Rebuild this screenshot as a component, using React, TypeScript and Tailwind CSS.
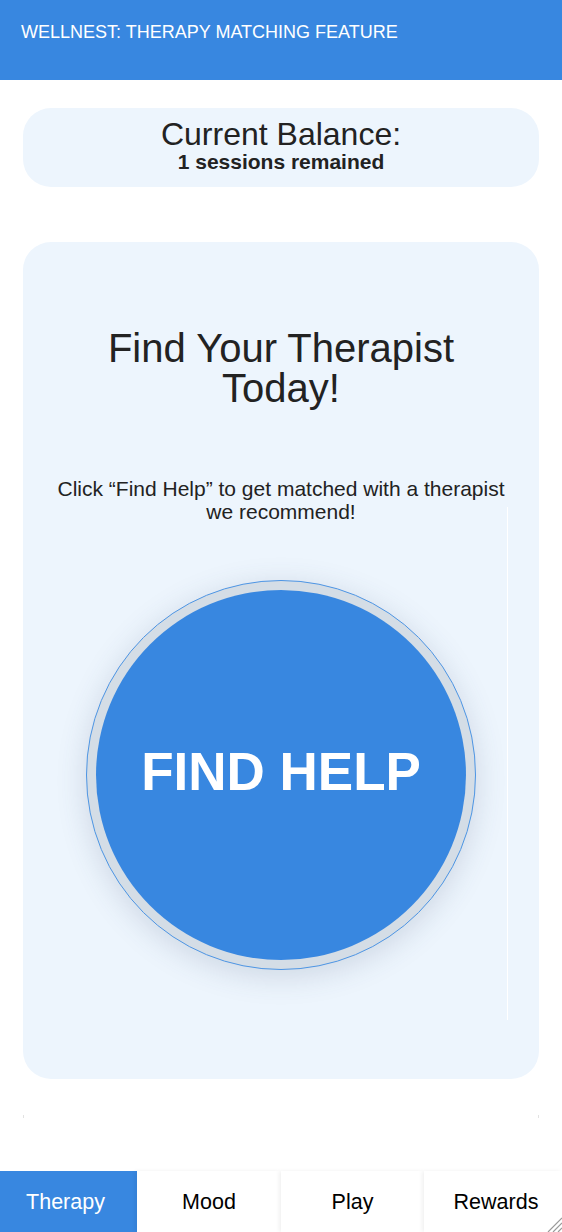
import React from "react"

const tabs = [
  { label: "Therapy", width: "w-[137px] pr-[6px]" },
  { label: "Mood", width: "w-[144px]" },
  { label: "Play", width: "w-[143px]" },
  { label: "Rewards", width: "flex-1 pl-[6px]" },
]

export default function App() {
  return (
    <div className="relative flex h-[1232px] w-[562px] flex-col overflow-hidden bg-white font-['Liberation_Sans',Arial,sans-serif] text-[#222]">
      {/* Header */}
      <header className="h-[80px] shrink-0 bg-[#3887e0] pl-[21px] pt-[21px]">
        <h1 className="text-[18px] leading-[22px] text-white">WELLNEST: THERAPY MATCHING FEATURE</h1>
      </header>

      {/* Balance */}
      <div className="mx-[23px] mt-[28px] flex h-[79px] flex-col items-center justify-center rounded-[28px] bg-[#edf5fd] pb-[6px]">
        <p className="text-[32px] leading-[34px]">Current Balance:</p>
        <p className="text-[21px] font-bold leading-[22px]">1 sessions remained</p>
      </div>

      {/* Matching card */}
      <section className="relative mx-[23px] mt-[55px] flex h-[837px] flex-col items-center rounded-[28px] bg-[#edf5fd] pt-[86px]">
        <h2 className="text-center text-[40px] leading-[40px]">
          Find Your Therapist
          <br />
          Today!
        </h2>
        <p className="mt-[69px] text-center text-[21px] leading-[23px]">
          Click “Find Help” to get matched with a therapist
          <br />
          we recommend!
        </p>
        <div className="mt-[57px] h-[390px] w-[390px] rounded-full border border-[#4d95e4] bg-[#d4dde6] p-[9px] shadow-[0_6px_30px_rgba(60,80,110,0.18)]">
          <button className="flex h-full w-full items-center justify-center rounded-full bg-[#3887e0] pb-[6px] text-[53px] font-bold text-white">
            FIND HELP
          </button>
        </div>
        <div className="absolute left-[484px] top-[265px] h-[513px] w-px bg-white" />
      </section>

      <div className="mx-[23px] mt-[36px] h-[3px] border-x border-[#e2e2e2]" />

      {/* Tab bar */}
      <nav className="mt-auto flex h-[61px]">
        {tabs.map((tab, i) => (
          <div
            key={tab.label}
            className={
              i === 0
                ? `${tab.width} flex items-center justify-center bg-[#3887e0] pt-[2px] text-[21.5px] text-white`
                : `${tab.width} flex items-center justify-center bg-white pt-[2px] text-[21.5px] text-black shadow-[-2px_0_4px_rgba(0,0,0,0.06)]`
            }
          >
            {tab.label}
          </div>
        ))}
      </nav>

      <svg className="absolute bottom-0 right-0" width="18" height="18" viewBox="0 0 18 18">
        <path d="M18 4 L4 18 M18 9 L9 18 M18 14 L14 18" stroke="#9a9a9a" strokeWidth="1.2" />
      </svg>
    </div>
  )
}
